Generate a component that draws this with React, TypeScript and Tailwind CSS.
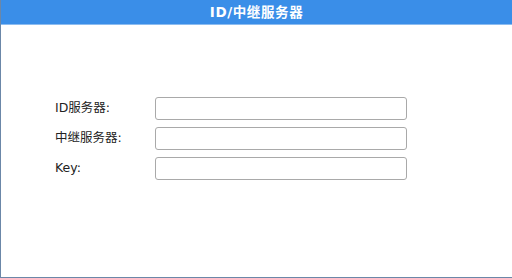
import React from 'react';

const fields = [
  { id: 'id-server', label: 'ID服务器:' },
  { id: 'relay-server', label: '中继服务器:' },
  { id: 'key', label: 'Key:' },
];

export default function App() {
  return (
    <div
      className="w-[512px] h-[278px] bg-white flex flex-col border-l border-b border-[#6b87a8] overflow-hidden"
      style={{ fontFamily: '"DejaVu Sans", "Noto Sans CJK SC", sans-serif' }}
    >
      <div className="h-[25px] bg-[#3a8ee8] border-b border-[#8cbcf0] flex items-center justify-center shrink-0">
        <span className="text-white text-[13.5px] font-bold tracking-[0.6px]">ID/中继服务器</span>
      </div>
      <div className="flex flex-col gap-[7px] pt-[72px] pl-[54px]">
        {fields.map((f) => (
          <div key={f.id} className="flex items-center">
            <label htmlFor={f.id} className="w-[100px] text-[12.5px] text-[#222]">
              {f.label}
            </label>
            <input
              id={f.id}
              type="text"
              className="w-[252px] h-[23px] border border-[#a9a9a9] rounded-[3px] bg-white outline-none px-1 text-[12px]"
            />
          </div>
        ))}
      </div>
    </div>
  );
}
